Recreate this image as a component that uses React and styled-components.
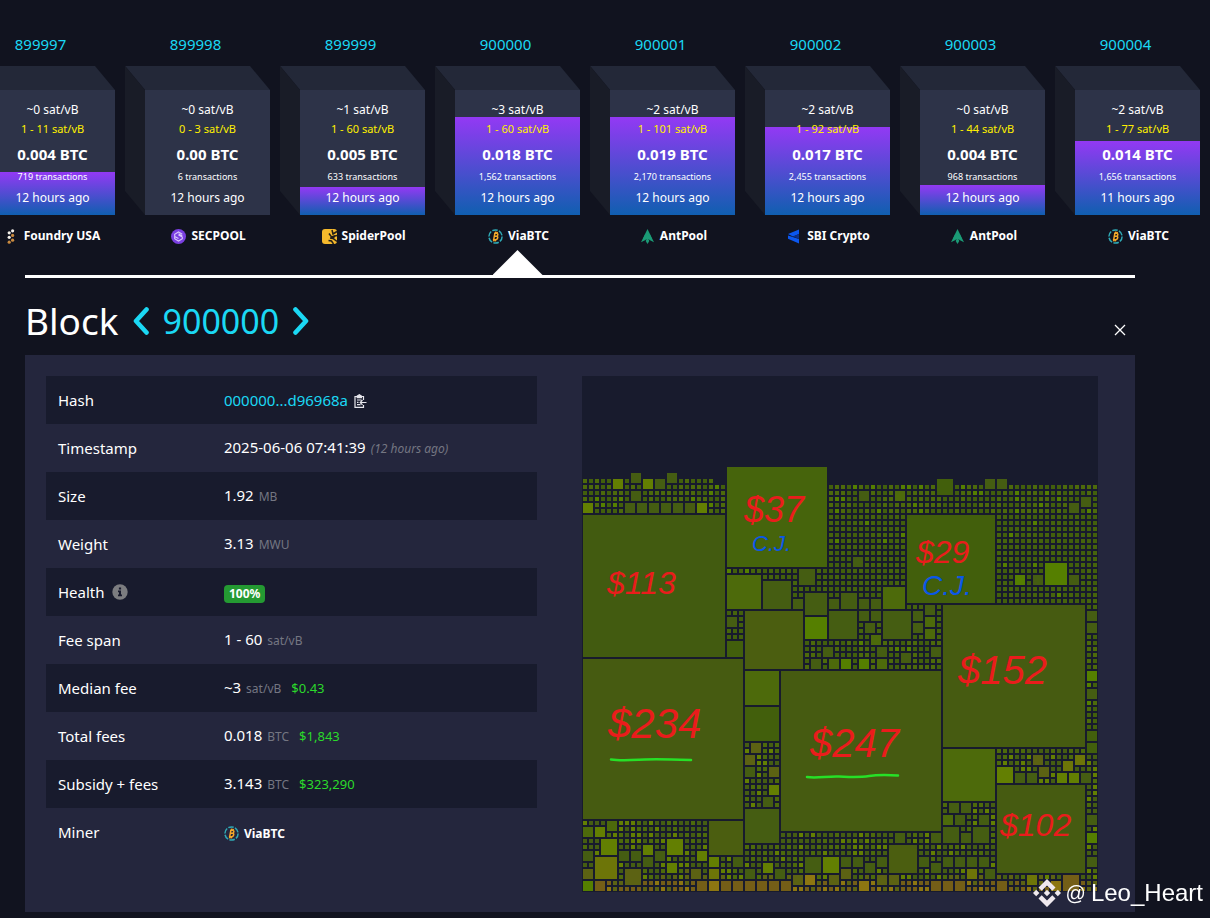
import React, { useState } from 'react'
import styled, { createGlobalStyle } from 'styled-components';

const GlobalStyle = createGlobalStyle`
  * {
    box-sizing: border-box;
  }
  body {
    margin: 0;
    background: #11131f;
    color: #fff;
    font-family: "Noto Sans", "Open Sans", sans-serif;
    font-size: 15px;
    line-height: 24px;
  }
  a {
    color: #1bd8f4;
    text-decoration: none;
  }
  button {
    padding: 0;
    border: 0;
    background: none;
    color: inherit;
    font: inherit;
    cursor: pointer;
  }
`;

const Page = styled.div`
  overflow: hidden;
`;

const Chain = styled.ul`
  display: flex;
  gap: 10px;
  margin: 0 0 0 -30px;
  padding: 32px 0 0;
  list-style: none;
`;

const ChainItem = styled.li`
  flex: none;
  width: 145px;
`;

const Height = styled.a`
  display: block;
  margin-bottom: 10px;
  padding-right: 4px;
  text-align: center;
`;

const Cube = styled.div`
  display: grid;
  grid-template-columns: 20px 125px;
  grid-template-rows: 24px 125px;
`;

const CubeTop = styled.div`
  grid-area: 1 / 1 / 2 / 3;
  background: #232838;
  clip-path: polygon(0 0, 125px 0, 100% 100%, 20px 100%);
`;

const CubeSide = styled.div`
  grid-area: 1 / 1 / 3 / 2;
  background: #191c27;
  clip-path: polygon(0 0, 100% 24px, 100% 100%, 0 125px);
`;

const CubeFace = styled.button`
  grid-area: 2 / 2 / 3 / 3;
  display: flex;
  flex-direction: column;
  align-items: center;
  padding-top: 10px;
  white-space: nowrap;
  background:
    linear-gradient(#9339f4, #105fb0) bottom / 100% ${(props) => props.$fill}% no-repeat,
    #2d3348;
`;

const Rate = styled.span`
  font-size: 12px;
  line-height: 20px;
`;

const RateSpan = styled(Rate)`
  color: #fff000;
  font-size: 11px;
  line-height: 18px;
`;

const Amount = styled.strong`
  font-size: 15px;
  line-height: 32px;
`;

const TxCount = styled.span`
  font-size: 9px;
  line-height: 14px;
`;

const Age = styled.span`
  font-size: 12px;
  line-height: 28px;
`;

const PoolRow = styled.div`
  display: flex;
  justify-content: center;
  padding: 11px 0 4px 22px;
`;

const PoolLink = styled.a`
  display: inline-flex;
  align-items: center;
  gap: 5px;
  color: #fff;
  font-size: 12px;
  font-weight: 700;
  line-height: 20px;
  vertical-align: middle;
`;

const Arrow = styled.div`
  width: 50px;
  height: 25px;
  margin: 0 auto;
  transform: translateX(10px);
  background: ${(props) => (props.$active ? '#fff' : 'transparent')};
  clip-path: polygon(50% 0, 100% 100%, 0 100%);
`;

const Detail = styled.main`
  margin: 0 75px 0 25px;
  border-top: 3px solid #fff;
`;

const TitleBar = styled.div`
  display: flex;
  align-items: center;
  justify-content: space-between;
  height: 77px;
  padding: 8px 8px 0 0;
`;

const Title = styled.h1`
  display: flex;
  align-items: center;
  gap: 14px;
  margin: 0;
  font-size: 37px;
  font-weight: 400;
  line-height: 48px;

  > a {
    display: flex;
  }
`;

const TitleNumber = styled.a`
  font-size: 34px;
`;

const CloseButton = styled.button`
  display: flex;
  margin-top: 18px;
`;

const Panel = styled.section`
  display: grid;
  grid-template-columns: 491fr 516fr;
  gap: 45px;
  align-items: start;
  padding: 21px 37px 20px 21px;
  background: #24263d;
`;

const InfoTable = styled.table`
  width: 100%;
  table-layout: fixed;
  border-collapse: collapse;

  tr:nth-child(odd) {
    background: #181b2d;
  }
  th, td {
    height: 48px;
    padding: 0 12px;
    font-weight: 400;
    text-align: left;
    white-space: nowrap;
  }
  th {
    width: 34%;
  }
  td {
    padding-left: 11px;
  }
  svg {
    vertical-align: middle;
  }
`;

const Unit = styled.span`
  margin-left: 5px;
  color: #747682;
  font-size: 12px;
`;

const Ago = styled(Unit)`
  font-style: italic;
`;

const Fiat = styled.span`
  margin-left: 10px;
  color: #2bd92b;
  font-size: 13px;
`;

const IconButton = styled.button`
  display: inline-flex;
  margin-left: ${(props) => props.$gap}px;
  vertical-align: -2px;
`;

const Badge = styled.span`
  display: inline-block;
  padding: 0 5px;
  border-radius: 4px;
  background: #249a32;
  font-size: 12px;
  font-weight: 700;
  line-height: 18px;
`;

const Map = styled.svg`
  display: block;
  width: 100%;
  background: #181b2d;
`;

const Note = styled.text`
  fill: ${(props) => props.$color};
  font-family: "Liberation Sans", Arial, sans-serif;
  font-size: ${(props) => props.$size}px;
  font-style: italic;
`;

const Signature = styled.div`
  position: fixed;
  right: 7px;
  bottom: 10px;
  display: flex;
  align-items: center;
  gap: 5px;
  font-family: "Liberation Sans", Arial, sans-serif;
  font-size: 24px;
  line-height: 30px;

  > span {
    font-size: 20px;
  }
`;

const blocks = [
  { height: 899997, rate: '~0', span: '1 - 11', btc: '0.004', tx: '719', ago: '12 hours ago', fill: 34.4, pool: 'Foundry USA' },
  { height: 899998, rate: '~0', span: '0 - 3', btc: '0.00', tx: '6', ago: '12 hours ago', fill: 0, pool: 'SECPOOL' },
  { height: 899999, rate: '~1', span: '1 - 60', btc: '0.005', tx: '633', ago: '12 hours ago', fill: 22.4, pool: 'SpiderPool' },
  { height: 900000, rate: '~3', span: '1 - 60', btc: '0.018', tx: '1,562', ago: '12 hours ago', fill: 78.4, pool: 'ViaBTC' },
  { height: 900001, rate: '~2', span: '1 - 101', btc: '0.019', tx: '2,170', ago: '12 hours ago', fill: 78.4, pool: 'AntPool' },
  { height: 900002, rate: '~2', span: '1 - 92', btc: '0.017', tx: '2,455', ago: '12 hours ago', fill: 70.4, pool: 'SBI Crypto' },
  { height: 900003, rate: '~0', span: '1 - 44', btc: '0.004', tx: '968', ago: '12 hours ago', fill: 24, pool: 'AntPool' },
  { height: 900004, rate: '~2', span: '1 - 77', btc: '0.014', tx: '1,656', ago: '11 hours ago', fill: 59.2, pool: 'ViaBTC' },
];

const logos = {
  'Foundry USA': (
    <g>
      <g fill="#f4f1ea">
        <circle cx="5.600" cy="1.800" r="1.600" />
        <circle cx="2.200" cy="3.800" r="1.600" />
        <circle cx="2.200" cy="8.300" r="1.600" />
      </g>
      <g fill="#c98a3f">
        <circle cx="5.600" cy="6.400" r="1.600" />
        <circle cx="5.600" cy="11.200" r="1.600" />
        <circle cx="2.200" cy="13.200" r="1.600" />
      </g>
    </g>
  ),
  SECPOOL: (
    <g>
      <circle cx="7.500" cy="7.500" r="7.500" fill="#7a3fe0" />
      <path d="M11.300 5.200 7.500 3 3.700 5.200v4.600l3.800 2.200 3.800-2.200V8L7.500 6M3.700 7.400l3.800 2.100M7.500 4.800 11.300 7" fill="none" stroke="#d9c8fa" strokeWidth="1.100" />
    </g>
  ),
  SpiderPool: (
    <g>
      <rect width="15" height="15" rx="3" fill="#f5b92c" />
      <path d="M7 4.500 9.500 8 15 6.500M8 9l3 .500 4 3M6.500 11.500l3 .500 2 3M10 1l1 4 4-2.500M9 8l2 1" fill="none" stroke="#231f1a" strokeWidth="1.500" />
      <path d="M9 7.500 13.500 6 12 10z" fill="#231f1a" />
    </g>
  ),
  ViaBTC: (
    <g fill="none">
      <circle cx="7.500" cy="7.500" r="6.600" stroke="#2fa9b5" strokeWidth="1.500" strokeDasharray="5.500 1.400" />
      <path d="M6.300 4.200h2.200c2 0 1.700 3-.2 3H6.200h2.100c2.300 0 1.700 3.500-.6 3.500H4.900M6.900 4.200l-1.200 6.500M7.700 2.700l-.3 1.500m1.900-1.300-.3 1.400M6 10.800l-.3 1.500m2-1.500-.3 1.500" stroke="#f3a82a" strokeWidth="1.500" />
    </g>
  ),
  AntPool: (
    <g fill="#1b9b76">
      <path d="M7.500 0 14 13.200 9.500 11 7.500 7.200 5.500 11 1 13.200z" />
      <path d="M7.500 8.500 9.300 12 7.500 15 5.700 12z" />
      <path d="M5 5.500 7.500 7 10 5.500 12 10 7.500 10.500 3 10z" />
    </g>
  ),
  'SBI Crypto': (
    <g>
      <path d="M1 5 12 .5V5L6 7.500zM1 6.500 12 10v4.500L1 9.800z" fill="#0b57f0" />
      <path d="M12 5v5L6 7.500z" fill="#0a2f8c" />
    </g>
  ),
};

// width, height of the block grid, in cells of 6px
const GRID = 86;

// column, row, side, tone
const txs = [
  [0, 23, 24, 'a'], [24, 15, 17, 'b'], [0, 47, 27, 'c'], [33, 49, 27, 'c'], [54, 23, 15, 'd'], [60, 38, 24, 'c'], [69, 68, 15, 'c'],
  [5, 17, 2, 'l'], [8, 16, 2], [10, 17, 2, 'l'], [12, 17, 2], [14, 16, 2], [8, 19, 2], [0, 21, 2, 'l'], [7, 21, 2], [9, 21, 2],
  [11, 21, 2], [13, 21, 2], [15, 21, 2], [17, 21, 2, 'c'], [19, 21, 2, 'l'], [24, 33, 6, 'm'], [30, 34, 5], [36, 32, 3],
  [35, 37, 2], [37, 36, 4], [41, 37, 2], [43, 36, 3], [27, 39, 10, 'e'], [24, 40, 2], [24, 44, 3, 'd'], [37, 40, 4, 'g'],
  [41, 39, 5], [40, 45, 2], [38, 47, 2], [41, 47, 2, 'm'], [43, 47, 2, 'g'], [27, 49, 6, 'm'], [27, 55, 6, 'd'],
  [59, 17, 3, 'd'], [67, 17, 2], [69, 17, 2], [46, 19, 2], [52, 19, 2, 'm'], [83, 20, 2], [81, 21, 2], [45, 30, 2],
  [72, 33, 2, 'g'], [75, 33, 2], [77, 31, 4, 'g'], [81, 33, 2], [50, 35, 4, 'm'], [46, 37, 2], [48, 37, 2], [46, 39, 2],
  [48, 39, 2], [50, 39, 5], [55, 39, 2], [55, 41, 2], [57, 38, 2], [57, 40, 2, 'm'], [57, 42, 2, 'm'], [47, 41, 2],
  [48, 43, 2, 'm'], [49, 45, 2], [53, 46, 2], [58, 45, 2], [46, 47, 2, 'g'], [49, 47, 2, 'm'], [84, 39, 2], [84, 41, 2],
  [84, 49, 2, 'g'], [84, 52, 2], [84, 59, 2, 'd'], [84, 61, 2, 'd'], [84, 73, 2], [84, 76, 2, 'g'], [84, 80, 2],
  [60, 62, 9, 'm'], [69, 65, 3, 'l'], [72, 66, 2], [74, 66, 2], [75, 63, 2, 'o'], [76, 65, 2, 'o'], [79, 66, 2, 'l'],
  [81, 66, 2, 'l'], [83, 66, 2], [80, 64, 2, 'y'], [82, 63, 2, 'y'], [61, 71, 2], [63, 71, 2], [60, 73, 2, 'm'], [62, 73, 2],
  [66, 73, 2], [60, 75, 3], [63, 76, 2], [65, 75, 3], [52, 76, 2], [58, 76, 2], [51, 78, 5, 'e'], [56, 80, 2], [58, 81, 2],
  [60, 80, 2], [62, 80, 2], [64, 80, 2], [66, 80, 2], [64, 82, 2, 'y'], [67, 82, 2], [40, 80, 3, 'l'], [43, 80, 2], [45, 80, 2],
  [47, 81, 2], [49, 80, 2], [43, 82, 2, 'o'], [49, 83, 2, 'o'], [51, 83, 2, 'o'], [46, 84, 2, 'w'], [58, 84, 2, 'n'],
  [60, 84, 2, 'n'], [62, 84, 2, 'n'], [69, 84, 2, 'n'], [74, 83, 2, 'y'], [80, 83, 3, 'n'], [78, 84, 2, 'w'], [28, 61, 2, 'o'],
  [27, 63, 2, 'o'], [27, 65, 2], [31, 65, 2, 'o'], [31, 68, 2, 'l'], [30, 70, 2], [27, 72, 6], [4, 74, 2, 'm'], [0, 75, 2, 'm'],
  [2, 75, 2, 'l'], [3, 77, 3, 'l'], [0, 79, 2], [6, 79, 2], [8, 79, 2], [10, 78, 2, 'l'], [12, 79, 2], [14, 77, 3, 'l'],
  [19, 79, 2, 'l'], [21, 74, 6, 'e'], [2, 80, 4, 'y'], [10, 80, 2], [14, 81, 2, 'l'], [0, 82, 2, 'o'], [7, 82, 3, 'o'],
  [21, 80, 2, 'l'], [25, 80, 2], [18, 82, 2, 'o'], [21, 82, 2, 'y'], [27, 82, 2], [30, 81, 2, 'l'], [32, 82, 2], [37, 80, 3],
  [35, 83, 2, 'o'], [37, 83, 2, 'w'], [41, 83, 2, 'o'], [0, 84, 2, 'g'], [2, 84, 2, 'n'], [19, 84, 2, 'n'], [21, 84, 2, 'w'],
  [23, 84, 2, 'n'], [25, 84, 2, 'n'], [27, 84, 2, 'n'], [29, 84, 2, 'n'], [31, 84, 2, 'n'], [33, 84, 2, 'n'],
];

const tones = {
  a: '#425b10',
  b: '#46640c',
  c: '#465b11',
  d: '#425f0c',
  e: '#4b5e10',
  f: '#455d12',
  m: '#4d6a0b',
  g: '#557f00',
  l: '#637f02',
  y: '#6d7508',
  o: '#5c6213',
  n: '#745e17',
  w: '#8d7611',
};

// repeatable noise, so that the small transactions keep their tones
function noise(c, r) {
  const n = Math.sin(c * 127.1 + r * 311.7) * 43758.5453;
  return n - Math.floor(n);
}

function smallTone(c, r) {
  const n = noise(c, r);
  if (r >= 84) {
    return n > 0.8 ? 'w' : n > 0.3 ? 'n' : 'o';
  }
  if (r >= 60) {
    return n > 0.78 ? 'l' : n > 0.55 ? 'm' : r > 81 && n < 0.25 ? 'o' : 'f';
  }
  if (r < 23 || r > 43) {
    return n > 0.92 ? 'g' : n > 0.5 ? 'm' : 'd';
  }
  return n > 0.99 ? 'g' : n > 0.6 ? 'b' : 'd';
}

function buildCells() {
  const used = new Set();
  const cells = txs.map(([c, r, n, tone = 'f']) => {
    for (let i = 0; i < n; i++) {
      for (let j = 0; j < n; j++) {
        used.add((r + j) * GRID + c + i);
      }
    }
    return { c, r, n, tone };
  });
  // the top row is only partly filled
  [0, 1, 2, 3, 4, 7, 16, 17, 18, 19, 20, 21].forEach((c) => {
    cells.push({ c, r: 17, n: 1, tone: smallTone(c, 17) });
  });
  for (let r = 18; r < GRID; r++) {
    for (let c = 0; c < GRID; c++) {
      if (!used.has(r * GRID + c)) {
        cells.push({ c, r, n: 1, tone: smallTone(c, r) });
      }
    }
  }
  return cells;
}

const cells = buildCells();

const RED = '#ea1c1c';
const BLUE = '#0a57e8';

const notes = [
  { x: 25, y: 218, size: 32, color: RED, text: '$113' },
  { x: 162, y: 146, size: 36, color: RED, text: '$37' },
  { x: 170, y: 175, size: 22, color: BLUE, text: 'C.J.' },
  { x: 334, y: 187, size: 32, color: RED, text: '$29' },
  { x: 340, y: 219, size: 28, color: BLUE, text: 'C.J.' },
  { x: 376, y: 308, size: 40, color: RED, text: '$152' },
  { x: 26, y: 362, size: 42, color: RED, text: '$234' },
  { x: 228, y: 381, size: 40, color: RED, text: '$247' },
  { x: 418, y: 460, size: 32, color: RED, text: '$102' },
];

function PoolLogo({name}) {
  const width = name === 'Foundry USA' ? 12 : 15;
  return (
    <svg width={width} height="15" viewBox={`0 0 ${width} 15`} aria-hidden="true">
      {logos[name]}
    </svg>
  )
}

function Pool({name}) {
  return (
    <PoolLink href="#pool">
      <PoolLogo name={name} />
      {name}
    </PoolLink>
  )
}

function Chevron({d}) {
  return (
    <svg width="16" height="28" viewBox="0 0 16 28" fill="none" stroke="#1bd8f4" strokeWidth="4.600" strokeLinecap="round" strokeLinejoin="round">
      <path d={d} />
    </svg>
  )
}

function BlockMap() {
  return (
    <Map viewBox="0 0 516 516" role="img" aria-label="Block transactions">
      {cells.map((cell) => (
        <rect
          key={`${cell.c}-${cell.r}`}
          x={cell.c * 6 + 1}
          y={cell.r * 6 + 1}
          width={cell.n * 6 - 2}
          height={cell.n * 6 - 2}
          fill={tones[cell.tone]}
        />
      ))}
      {notes.map((note) => (
        <Note key={`${note.x}-${note.y}`} x={note.x} y={note.y} $size={note.size} $color={note.color}>
          {note.text}
        </Note>
      ))}
      <g fill="none" stroke="#27e027" strokeWidth="2.500" strokeLinecap="round">
        <path d="M29 383.500c10 1.500 22 .5 34 0s30 0 46 .5" />
        <path d="M225 401c10 1.500 20-1 32-.5 14 .5 20 1 30-.5s20-1 29-.5" />
      </g>
    </Map>
  )
}

function App() {
  const [selected, setSelected] = useState(900000);
  return (
    <Page>
      <GlobalStyle />
      <Chain>
        {blocks.map((block) => (
          <ChainItem key={block.height}>
            <Height href="#block">{block.height}</Height>
            <Cube>
              <CubeTop />
              <CubeSide />
              <CubeFace $fill={block.fill} onClick={() => {setSelected(block.height)}}>
                <Rate>{block.rate} sat/vB</Rate>
                <RateSpan>{block.span} sat/vB</RateSpan>
                <Amount>{block.btc} BTC</Amount>
                <TxCount>{block.tx} transactions</TxCount>
                <Age>{block.ago}</Age>
              </CubeFace>
            </Cube>
            <PoolRow>
              <Pool name={block.pool} />
            </PoolRow>
            <Arrow $active={selected === block.height} />
          </ChainItem>
        ))}
      </Chain>
      <Detail>
        <TitleBar>
          <Title>
            Block
            <a href="#previous" aria-label="Previous block"><Chevron d="M13.500 2.500 3 14l10.500 11.500" /></a>
            <TitleNumber href="#block">900000</TitleNumber>
            <a href="#next" aria-label="Next block"><Chevron d="M2.500 2.500 13 14 2.500 25.500" /></a>
          </Title>
          <CloseButton aria-label="Close">
            <svg width="14" height="14" viewBox="0 0 14 14" stroke="#fff" strokeWidth="1.300">
              <path d="m2 2 10 10M12 2 2 12" />
            </svg>
          </CloseButton>
        </TitleBar>
        <Panel>
          <InfoTable>
            <tbody>
              <tr>
                <th scope="row">Hash</th>
                <td>
                  <a href="#hash">000000...d96968a</a>
                  <IconButton $gap={6} aria-label="Copy">
                    <svg width="13" height="14" viewBox="0 0 13 14" fill="none" stroke="#e6e6ec" strokeWidth="1.200">
                      <path d="M9.500 6V2.500H1v10.800h8.500V11" />
                      <path d="M3.200 3.600V2L5.300.700 7.400 2v1.600z" fill="#e6e6ec" />
                      <path d="M3 6h4.500M3 8.300h1.500M3 10.700h3.500M12.500 8.500H6.500M8.500 6.200 6.200 8.500l2.300 2.300" />
                    </svg>
                  </IconButton>
                </td>
              </tr>
              <tr>
                <th scope="row">Timestamp</th>
                <td>2025-06-06 07:41:39<Ago>(12 hours ago)</Ago></td>
              </tr>
              <tr>
                <th scope="row">Size</th>
                <td>1.92<Unit>MB</Unit></td>
              </tr>
              <tr>
                <th scope="row">Weight</th>
                <td>3.13<Unit>MWU</Unit></td>
              </tr>
              <tr>
                <th scope="row">
                  Health
                  <IconButton $gap={7} aria-label="About block health">
                    <svg width="16" height="16" viewBox="0 0 16 16">
                      <circle cx="8" cy="8" r="7.700" fill="#7c7d80" />
                      <path d="M6.900 3.500h2.200v2H6.900zM6 6.600h3v4h1v1.700H6v-1.700h1V8.200H6z" fill="#181b2d" />
                    </svg>
                  </IconButton>
                </th>
                <td><Badge>100%</Badge></td>
              </tr>
              <tr>
                <th scope="row">Fee span</th>
                <td>1 - 60<Unit>sat/vB</Unit></td>
              </tr>
              <tr>
                <th scope="row">Median fee</th>
                <td>~3<Unit>sat/vB</Unit><Fiat>$0.43</Fiat></td>
              </tr>
              <tr>
                <th scope="row">Total fees</th>
                <td>0.018<Unit>BTC</Unit><Fiat>$1,843</Fiat></td>
              </tr>
              <tr>
                <th scope="row">Subsidy + fees</th>
                <td>3.143<Unit>BTC</Unit><Fiat>$323,290</Fiat></td>
              </tr>
              <tr>
                <th scope="row">Miner</th>
                <td><Pool name="ViaBTC" /></td>
              </tr>
            </tbody>
          </InfoTable>
          <BlockMap />
        </Panel>
      </Detail>
      <Signature>
        <svg width="28" height="28" viewBox="0 0 28 28" fill="#efe9ee">
          <path d="m14 0 8.500 8.500-3.200 3.200L14 6.400l-5.300 5.300-3.200-3.200zM14 28l-8.500-8.500 3.200-3.200 5.300 5.300 5.300-5.300 3.200 3.200zM0 14l3.200-3.200L6.400 14l-3.200 3.200zM21.600 14l3.200-3.200L28 14l-3.200 3.200zM10.800 14l3.200-3.200 3.200 3.200-3.200 3.200z" />
        </svg>
        <span>@</span>
        Leo_Heart
      </Signature>
    </Page>
  )
}

export default App
